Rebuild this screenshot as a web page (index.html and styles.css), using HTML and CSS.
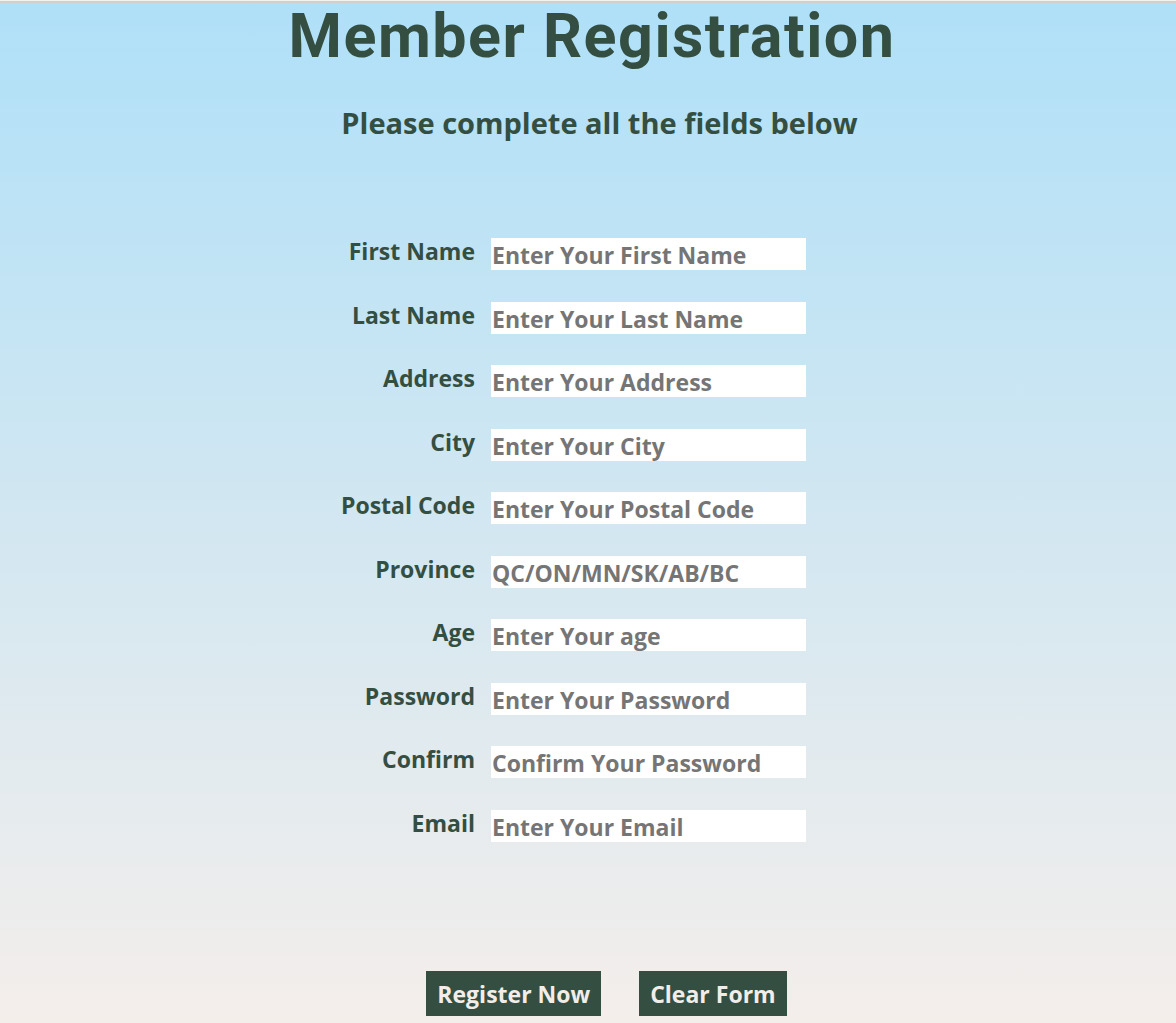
FILE: index.html
```html
<!DOCTYPE html>
<html lang="en">
<head>
<meta charset="utf-8">
<title>Member Registration</title>
<link rel="stylesheet" href="styles.css">
</head>
<body>
<div class="page">
  <h1 class="title">Member Registration</h1>
  <h2 class="subtitle">Please complete all the fields below</h2>
  <form class="form">
    <div class="fields">
      <label class="label" for="fn">First Name</label>
      <input class="input" id="fn" type="text" placeholder="Enter Your First Name">
      <label class="label" for="ln">Last Name</label>
      <input class="input" id="ln" type="text" placeholder="Enter Your Last Name">
      <label class="label" for="ad">Address</label>
      <input class="input" id="ad" type="text" placeholder="Enter Your Address">
      <label class="label" for="ci">City</label>
      <input class="input" id="ci" type="text" placeholder="Enter Your City">
      <label class="label" for="pc">Postal Code</label>
      <input class="input" id="pc" type="text" placeholder="Enter Your Postal Code">
      <label class="label" for="pr">Province</label>
      <input class="input" id="pr" type="text" placeholder="QC/ON/MN/SK/AB/BC">
      <label class="label" for="ag">Age</label>
      <input class="input" id="ag" type="text" placeholder="Enter Your age">
      <label class="label" for="pw">Password</label>
      <input class="input" id="pw" type="password" placeholder="Enter Your Password">
      <label class="label" for="cp">Confirm</label>
      <input class="input" id="cp" type="password" placeholder="Confirm Your Password">
      <label class="label" for="em">Email</label>
      <input class="input" id="em" type="text" placeholder="Enter Your Email">
    </div>
    <div class="actions">
      <button class="btn" type="button">Register Now</button>
      <button class="btn" type="button">Clear Form</button>
    </div>
  </form>
</div>
</body>
</html>
```
FILE: styles.css
```css
html {
  background: #ffffff;
}
body {
  margin: 0;
  font-family: "Open Sans", "Noto Sans", sans-serif;
  color: #344f41;
}
.page {
  min-height: 1023px;
  background:
    linear-gradient(to bottom, #f2f2f2 0, #f2f2f2 1px, #cfcfcf 1px, #cfcfcf 3px, transparent 3px),
    linear-gradient(to bottom, #afe0f8 0%, #f4eeeb 100%);
  display: flex;
  flex-direction: column;
  align-items: center;
}
.title {
  margin: 0;
  font-family: Roboto, "Open Sans", sans-serif;
  font-size: 61px;
  font-weight: 700;
  line-height: normal;
  letter-spacing: 1.5px;
  padding-left: 8px;
}
.subtitle {
  margin: 31px 0 0;
  font-size: 29px;
  font-weight: 700;
  line-height: 40px;
  padding-left: 23px;
}
.form {
  display: flex;
  flex-direction: column;
  align-items: center;
}
.fields {
  margin: 95px 45px 0 0;
  display: grid;
  grid-template-columns: 150px 315px;
  column-gap: 16px;
  row-gap: 31.5px;
}
.label {
  font-size: 23px;
  font-weight: 700;
  text-align: right;
  line-height: 26px;
}
.input {
  width: 315px;
  height: 32px;
  box-sizing: border-box;
  border: none;
  margin: 0;
  padding: 2px 0 0 1px;
  background: #ffffff;
  font-family: "Open Sans", "Noto Sans", sans-serif;
  font-size: 23px;
  font-weight: 700;
  color: #757575;
  outline: none;
}
.input::placeholder {
  color: #757575;
  opacity: 1;
}
.actions {
  margin-top: 129px;
  display: flex;
  gap: 38px;
  padding-left: 37px;
}
.btn {
  height: 45px;
  border: none;
  background: #344f41;
  color: #f2ede9;
  font-family: "Open Sans", "Noto Sans", sans-serif;
  font-size: 23px;
  font-weight: 700;
  padding: 2px 11px 0;
}
```
